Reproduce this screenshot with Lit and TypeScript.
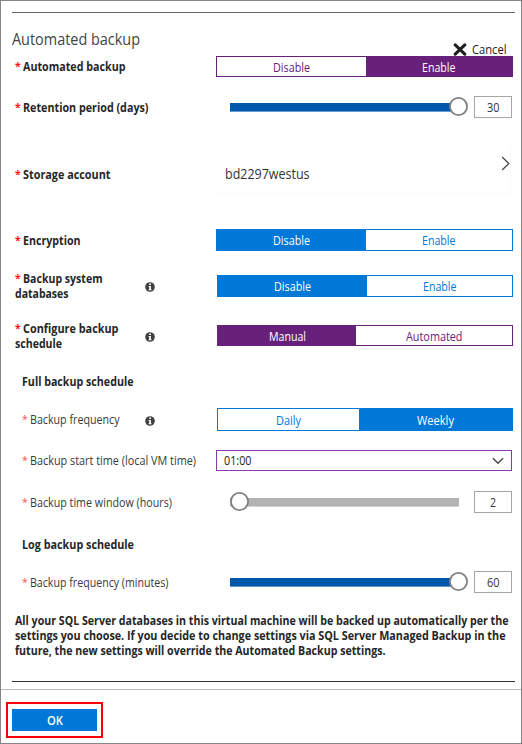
import { LitElement, html, svg, css, nothing, type TemplateResult } from 'lit';
import { customElement, property } from 'lit/decorators.js';
import { styleMap } from 'lit/directives/style-map.js';

const FAMILY = '"Open Sans", "Noto Sans", sans-serif';
const pen = document.createElement('canvas').getContext('2d')!;

/** Text narrowed horizontally so that the run takes up `width` pixels. */
function run(text: string, width: number, weight = 400, size = 12): TemplateResult {
  pen.font = `${weight} ${size}px ${FAMILY}`;
  const box = width + 0.5;
  const scale = box / pen.measureText(text).width;
  return html`<span style=${styleMap({
    display: 'inline-block',
    whiteSpace: 'nowrap',
    width: `${box}px`,
    transformOrigin: '0 50%',
    transform: `scaleX(${scale.toFixed(4)})`,
  })}>${text}</span>`;
}

type Word = [string, number];

@customElement('field-label')
class FieldLabel extends LitElement {
  @property({ attribute: false }) lines: Word[] = [];
  @property({ type: Boolean }) sub = false;
  @property({ type: Boolean }) info = false;

  static styles = css`
    :host { display: flex; align-items: center; width: 201px; flex: none; line-height: 15px; white-space: nowrap; }
    .text { font-weight: 700; color: #262626; }
    .line { display: flex; height: 15px; }
    .text.fixed { width: 130px; }
    .text.sub { font-weight: 400; color: #3a3a3a; padding-left: 7px; }
    .text.sub.fixed { width: 123px; }
    .star { width: 7.5px; flex: none; color: #fb1020; font-size: 10.5px; line-height: 14px; font-weight: 700; }
    .sub .star { color: #f55050; font-weight: 400; }
    svg { display: block; margin-top: 2px; }
  `;

  render() {
    const weight = this.sub ? 400 : 700;
    return html`
      <div class="text ${this.sub ? 'sub' : ''} ${this.info ? 'fixed' : ''}">
        ${this.lines.map(([t, w], i) => html`<div class="line">${i === 0 ? html`<span class="star">*</span>` : nothing}${run(t, w, weight)}</div>`)}
      </div>
      ${this.info
        ? html`<svg width="10" height="10" viewBox="0 0 10 10">
            <circle cx="5" cy="5" r="4.8" fill="#404040"></circle>
            <path d="M4.2 1.6h1.7v1.4H4.2zM3.6 4h2.3v3.2h.6v1H3.6v-1h.6V5h-.6z" fill="#fff"></path>
          </svg>`
        : nothing}
    `;
  }
}

@customElement('option-switch')
class OptionSwitch extends LitElement {
  @property({ attribute: false }) options: Word[] = [];
  @property({ type: Number }) active = 0;
  @property({ type: Number }) split = 150;
  @property() tone = 'blue';

  static styles = css`
    :host { display: flex; flex: 1; align-self: stretch; }
    .box { flex: 1; display: flex; border: 1px solid var(--tone); color: var(--tone); background: #fff; }
    .blue { --tone: #0078d7; }
    .purple { --tone: #68217a; }
    .opt { display: flex; align-items: center; justify-content: center; flex: 1; line-height: 15px; padding-top: 1px; }
    .first { flex: none; }
    .on { background: var(--tone); color: #fff; }
  `;

  render() {
    return html`<div class="box ${this.tone}">
      ${this.options.map(([t, w], i) => html`<div
        class="opt ${i === 0 ? 'first' : ''} ${i === this.active ? 'on' : ''}"
        style=${styleMap(i === 0 ? { width: `${this.split - 1}px` } : {})}
      >${run(t, w)}</div>`)}
    </div>`;
  }
}

@customElement('value-slider')
class ValueSlider extends LitElement {
  @property({ type: Number }) value = 0;
  @property({ type: Boolean }) full = false;

  static styles = css`
    :host { display: flex; flex: 1; align-self: stretch; align-items: center; padding-left: 14px; }
    svg { display: block; margin-right: 5px; overflow: visible; }
    .num { box-sizing: border-box; width: 38px; height: 22px; border: 1px solid #a6a6a6; display: flex; align-items: center; justify-content: center; line-height: 15px; color: #333; }
  `;

  render() {
    const knob = this.full ? 228.5 : 9.5;
    return html`
      <svg width="239" height="22" viewBox="0 0 239 22">
        ${svg`<rect x="0" y="7" width="229" height="8.6" fill=${this.full ? '#0058ad' : '#b3b3b3'}></rect>
        <circle cx=${knob} cy="10.5" r="8.6" fill="#fff" stroke="#808080" stroke-width="1.8"></circle>`}
      </svg>
      <div class="num">${run(String(this.value), this.value > 9 ? 12 : 5.5)}</div>
    `;
  }
}

@customElement('app-root')
class AppRoot extends LitElement {
  static styles = css`
    :host { display: block; font: 12px/15px "Open Sans", "Noto Sans", sans-serif; color: #262626; }
    .frame { box-sizing: border-box; width: 522px; height: 744px; border: 1px solid #858585; background: #fff; overflow: hidden; }
    .rule { height: 1px; margin: 0 6px 0 11px; background: #333; }
    .rule.top { margin-top: 11px; background: #666; }
    .rule.end { margin-top: 23px; }
    .head { display: flex; height: 43px; margin: 0 9px 0 11px; justify-content: space-between; white-space: nowrap; }
    .title { font-size: 16px; font-weight: 400; line-height: 22px; margin-top: 15px; color: #444; }
    .cancel { display: flex; align-items: center; height: 15px; margin-top: 29px; margin-right: 6px; gap: 5px; color: #222; }
    .cancel svg { display: block; }
    .row { display: flex; align-items: center; box-sizing: border-box; width: 512px; height: 22px; padding-left: 14px; }
    .shift { margin-left: 1px; }
    .h21 { height: 21px; }
    .h23 { height: 23px; }
    .m18 { margin-top: 18px; }
    .m19 { margin-top: 19px; }
    .m20 { margin-top: 20px; }
    .m24 { margin-top: 24px; }
    .m28 { margin-top: 28px; }
    .m35 { margin-top: 35px; }
    .storage { height: 53px; margin-top: 23px; }
    .storage field-label { padding-top: 14px; }
    .account { display: flex; justify-content: space-between; align-items: center; box-sizing: border-box; flex: none; width: 292px; height: 53px; margin-left: 3px; padding: 0 0 0 6px; border: solid #f5fafd; border-width: 0 1px 1px 0; font-size: 14px; color: #333; }
    .account .name { margin-top: 14px; line-height: 18px; }
    .account svg { display: block; margin-bottom: 7px; }
    .section { height: 16px; line-height: 16px; padding-left: 21px; font-weight: 700; white-space: nowrap; }
    .select { display: flex; align-items: center; justify-content: space-between; box-sizing: border-box; width: 296px; height: 21px; border: 1px solid #8a3bab; padding: 0 7px; color: #222; }
    .select svg { display: block; }
    .note { margin-top: 20px; padding-left: 14px; font-weight: 700; white-space: nowrap; }
    .note div { height: 15px; }
    .foot { margin-top: 7px; border-top: 1px solid #b8b8b8; padding: 12px 0 0 5px; }
    .mark { box-sizing: border-box; width: 97px; height: 36px; border: 2px solid #fb0007; padding: 5px 4px; }
    .ok { display: flex; align-items: center; justify-content: center; height: 22px; background: #0078d7; color: #fff; font-weight: 600; }
  `;

  render() {
    const toggle: Word[] = [['Disable', 36.5], ['Enable', 33]];
    return html`<div class="frame">
      <div class="rule top"></div>
      <div class="head">
        <div class="title">${run('Automated backup', 127.5, 400, 16)}</div>
        <div class="cancel">
          <svg width="14" height="13" viewBox="0 0 14 13"><path d="M2.2 1.9 11.8 11.1M11.8 1.9 2.2 11.1" stroke="#1f1f1f" stroke-width="3.1" stroke-linecap="round"></path></svg>
          ${run('Cancel', 34)}
        </div>
      </div>
      <div class="row h21">
        <field-label .lines=${[['Automated backup', 102]]}></field-label>
        <option-switch tone="purple" .options=${toggle} active="1" split="150"></option-switch>
      </div>
      <div class="row m19">
        <field-label .lines=${[['Retention period (days)', 125]]}></field-label>
        <value-slider value="30" full></value-slider>
      </div>
      <div class="row storage">
        <field-label .lines=${[['Storage account', 87]]}></field-label>
        <div class="account">
          <div class="name">${run('bd2297westus', 84, 400, 14)}</div>
          <svg width="9" height="15" viewBox="0 0 9 15"><path d="M1.2 1 7.8 7.5 1.2 14" fill="none" stroke="#444" stroke-width="1.2"></path></svg>
        </div>
      </div>
      <div class="row m35">
        <field-label .lines=${[['Encryption', 57]]}></field-label>
        <option-switch .options=${toggle} active="0" split="150"></option-switch>
      </div>
      <div class="row m24">
        <field-label info .lines=${[['Backup system', 79], ['databases', 53]]}></field-label>
        <option-switch class="shift" .options=${toggle} active="0" split="150"></option-switch>
      </div>
      <div class="row m28 h21">
        <field-label info .lines=${[['Configure backup', 95], ['schedule', 46.5]]}></field-label>
        <option-switch class="shift" tone="purple" .options=${[['Manual', 36.5], ['Automated', 56]]} active="0" split="139"></option-switch>
      </div>
      <div class="section m28">${run('Full backup schedule', 111, 700)}</div>
      <div class="row h23 m18">
        <field-label sub info .lines=${[['Backup frequency', 89]]}></field-label>
        <option-switch class="shift" .options=${[['Daily', 24.5], ['Weekly', 36.5]]} active="1" split="142"></option-switch>
      </div>
      <div class="row h21 m19">
        <field-label sub .lines=${[['Backup start time (local VM time)', 165.5]]}></field-label>
        <div class="select">
          ${run('01:00', 27)}
          <svg width="12" height="8" viewBox="0 0 12 8"><path d="M1 1.2 6 6.2 11 1.2" fill="none" stroke="#444" stroke-width="1.4"></path></svg>
        </div>
      </div>
      <div class="row m20">
        <field-label sub .lines=${[['Backup time window (hours)', 141.5]]}></field-label>
        <value-slider value="2"></value-slider>
      </div>
      <div class="section m24">${run('Log backup schedule', 111.5, 700)}</div>
      <div class="row m18">
        <field-label sub .lines=${[['Backup frequency (minutes)', 138]]}></field-label>
        <value-slider value="60" full></value-slider>
      </div>
      <div class="note">
        <div>${run('All your SQL Server databases in this virtual machine will be backed up automatically per the', 493, 700)}</div>
        <div>${run('settings you choose. If you decide to change settings via SQL Server Managed Backup in the', 490, 700)}</div>
        <div>${run('future, the new settings will override the Automated Backup settings.', 370, 700)}</div>
      </div>
      <div class="rule end"></div>
      <div class="foot"><div class="mark"><div class="ok">${run('OK', 15.5, 600)}</div></div></div>
    </div>`;
  }
}
